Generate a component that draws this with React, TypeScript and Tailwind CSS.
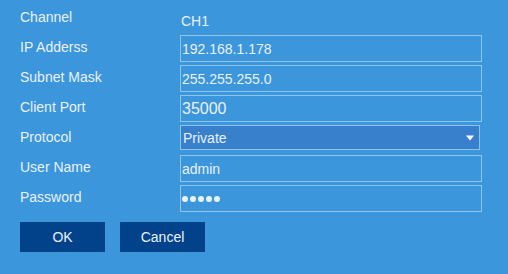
import React from "react";

const font = { fontFamily: '"Liberation Sans", Arial, sans-serif' };

function Field({ value, big }: { value: string; big?: boolean }) {
  return (
    <div className="flex h-[27px] w-[302px] items-center border border-[#8cc4ef] pl-[1px]">
      <span className={big ? "text-[16px] leading-4" : "text-[14px] leading-4"}>{value}</span>
    </div>
  );
}

function Row({ label, children }: { label: string; children: React.ReactNode }) {
  return (
    <div className="flex h-[27px] items-start">
      <div className="w-[160px] pt-[4px] text-[14px] leading-4">{label}</div>
      {children}
    </div>
  );
}

export default function App() {
  return (
    <div
      className="flex h-[274px] w-[508px] flex-col bg-[#3c96dc] pl-[20px] pt-[5px] text-[#e9f1fa]"
      style={font}
    >
      <div className="flex flex-col gap-[3px]">
        <Row label="Channel">
          <div className="pl-[1px] pt-[8px] text-[14px] leading-4">CH1</div>
        </Row>
        <Row label="IP Adderss">
          <Field value="192.168.1.178" />
        </Row>
        <Row label="Subnet Mask">
          <Field value="255.255.255.0" />
        </Row>
        <Row label="Client Port">
          <Field value="35000" big />
        </Row>
        <Row label="Protocol">
          <div className="flex h-[25px] w-[300px] items-center justify-between border border-[#8cc4ef] bg-[#3880cc] pl-[2px] pr-[5px]">
            <span className="text-[14px] leading-4">Private</span>
            <svg width="8" height="6" viewBox="0 0 8 6">
              <path d="M0 0.5 H8 L4 5.5 Z" fill="#ffffff" />
            </svg>
          </div>
        </Row>
        <Row label="User Name">
          <Field value="admin" />
        </Row>
        <Row label="Password">
          <div className="flex h-[27px] w-[302px] items-center gap-[2px] border border-[#8cc4ef] pl-[1px]">
            {[0, 1, 2, 3, 4].map((i) => (
              <span key={i} className="h-[6px] w-[6px] rounded-full bg-[#e9f1fa]" />
            ))}
          </div>
        </Row>
      </div>
      <div className="mt-[10px] flex gap-[15px]">
        <button className="h-[30px] w-[85px] bg-[#01428a] text-[14px] text-[#e9f1fa]">OK</button>
        <button className="h-[30px] w-[85px] bg-[#01428a] text-[14px] text-[#e9f1fa]">Cancel</button>
      </div>
    </div>
  );
}
